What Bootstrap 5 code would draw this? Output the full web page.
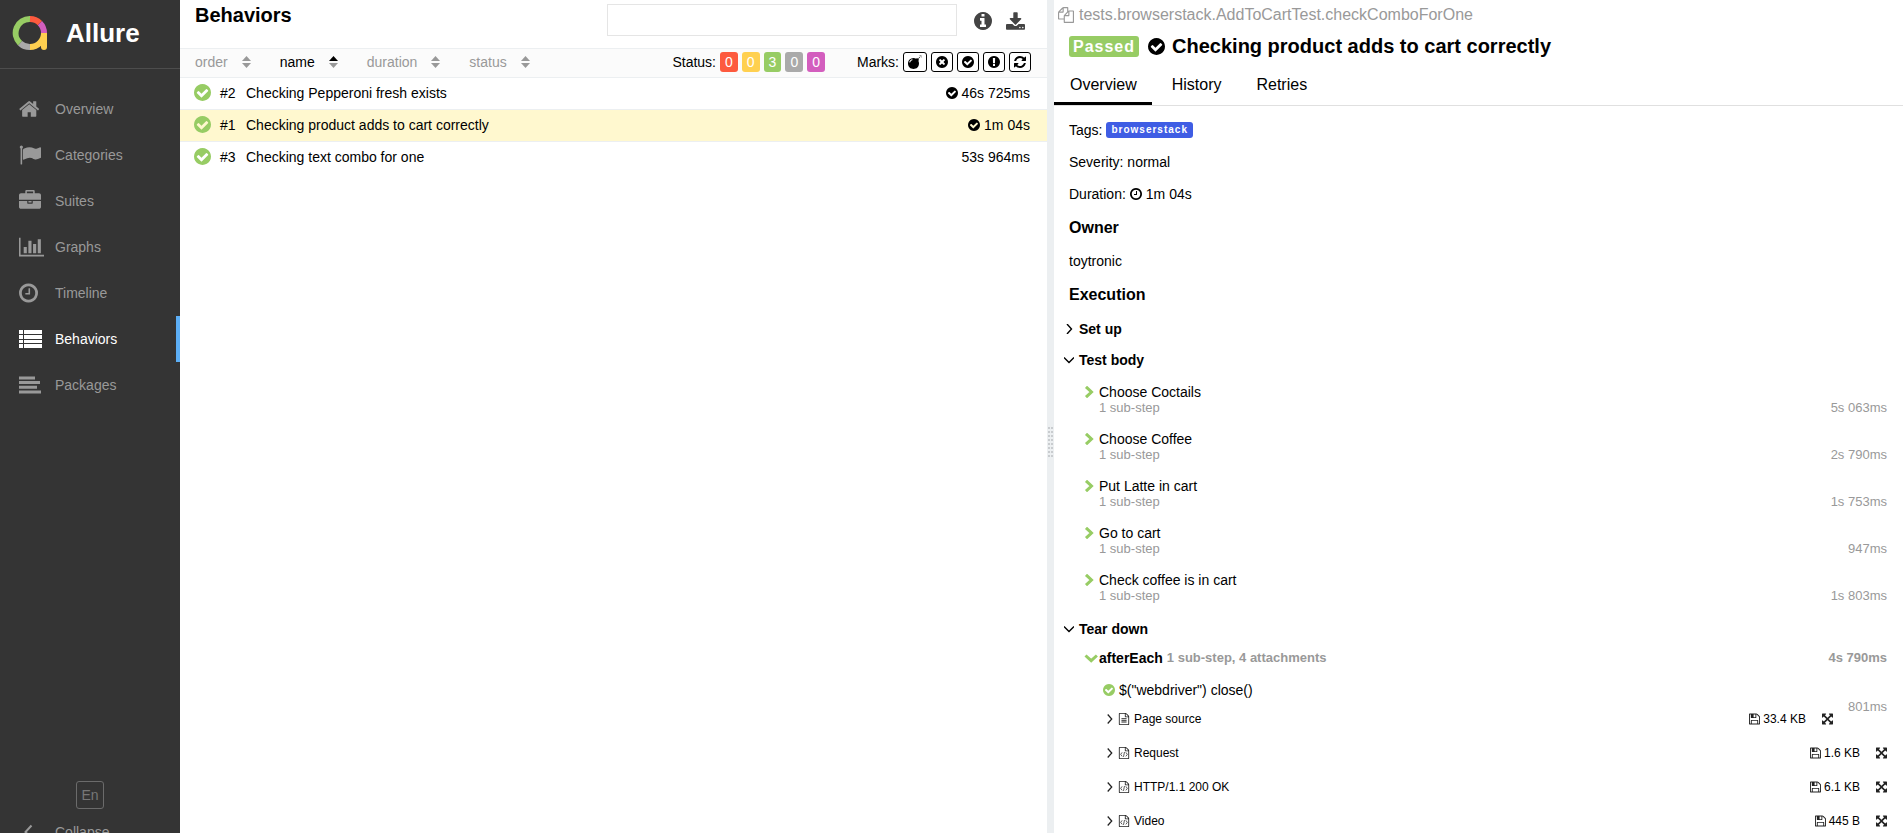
<!DOCTYPE html>
<html lang="en">
<head>
<meta charset="utf-8">
<meta name="viewport" content="width=device-width, initial-scale=1">
<title>Allure Report</title>
<link href="https://cdn.jsdelivr.net/npm/bootstrap@5.3.0/dist/css/bootstrap.min.css" rel="stylesheet">
<style>
  body { font: 14px/20px "Liberation Sans", Arial, sans-serif; color: #000; background: #fff; }
  a { color: inherit; text-decoration: none; }
  button { font: inherit; color: inherit; }
  .ico { width: 1em; height: 1em; fill: currentColor; flex: none; display: block; }
  .line-ico { fill: none; stroke: currentColor; }
  .w9 { width: 9px; }
  .w11 { width: 11px; }
  .w12 { width: 12px; height: 12px; }
  .w17 { width: 17px; height: 17px; }
  .w18 { width: 18px; height: 18px; }
  .w19 { width: 19px; }
  .w23 { width: 23px; }
  .w25 { width: 25px; }
  .muted { color: #999; }
  .passed-color { color: #97cc64; }

  /* side navigation */
  .side { flex: 0 0 180px; background: #343434; color: #999; }
  .side-inner { min-height: calc(100vh + 22px); }
  .brand { height: 69px; border-bottom: 1px solid #4d4d4d; color: #fff; font-size: 26px; font-weight: 700; padding: 0 0 2px 12px; gap: 18px; }
  .side-menu { padding-top: 17px; }
  .side-link { height: 46px; padding-left: 19px; border-right: 4px solid transparent; }
  .side-link.active { color: #fff; border-color: #5caef5; }
  .side-ico { width: 36px; font-size: 22px; }
  .lang-btn { width: 28px; height: 28px; border: 1px solid #6b6b6b; border-radius: 3px; background: none; color: #777; padding: 0; }

  /* list of tests */
  .tree-pane { flex: 867 1 0; min-width: 0; }
  .detail-pane { flex: 849 1 0; min-width: 0; }
  .tree-head { height: 49px; border-bottom: 1px solid #eceff1; padding: 0 22px 0 15px; gap: 14px; }
  h1 { font-size: 20px; line-height: 30px; font-weight: 700; margin: 0; }
  .search-box { width: 350px; height: 32px; border: 1px solid #e5e5e5; border-radius: 0; margin: 4px 3px 0 0; padding: 4px 8px; }
  .tool-btn { border: 0; background: none; padding: 0; height: 42px; color: #444; font-size: 20px; }
  .tree-bar { height: 29px; background: #fbfbfb; border-bottom: 1px solid #eceff1; padding: 0 16px 2px 15px; }
  .sort-list { gap: 29px; }
  .sort-btn { border: 0; background: none; padding: 0; gap: 14px; color: #999; }
  .sort-btn.active { color: #000; }
  .sort-btn .ico { width: 9px; height: 12px; }
  .count-btn { height: 20px; border: 0; border-radius: 3px; color: #fff; padding: 0 5px; }
  .st-failed { background: #fd5a3e; }
  .st-broken { background: #ffd050; }
  .st-passed { background: #97cc64; }
  .st-skipped { background: #aaa; }
  .st-unknown { background: #d35ebe; }
  .mark-group { margin-left: 32px; }
  .mark-btn { height: 20px; min-width: 22px; border: 1px solid #000; border-radius: 3px; background: #fff; padding: 0 4px; font-size: 14px; }
  .tree-row { height: 32px; border-bottom: 1px solid #eceff1; padding: 0 17px 2px 14px; }
  .tree-row.selected { background: #fff8cf; }
  .tree-row:last-child { border-color: transparent; }
  .gap-num { width: 26px; margin-left: 9px; }

  .gutter-bar { flex: 0 0 7px; background: #eceff1; }
  .gutter-dots { width: 5px; height: 32px; margin-top: 52px; }

  /* test details */
  .pkg-line { padding: 5px 0 0 4px; font-size: 16px; gap: 5px; }
  .test-title { padding-left: 15px; margin-top: 6px; font-size: 20px; line-height: 30px; font-weight: 700; }
  .title-ico { margin: 0 7px 0 9px; }
  .status-label { background: #97cc64; color: #fff; border-radius: 3px; font-size: 16px; line-height: 21px; letter-spacing: 1px; padding: 0 4px; }
  .tag-label { background: #3f5de4; color: #fff; border-radius: 3px; font-size: 10px; line-height: 16px; font-weight: 700; letter-spacing: 1px; padding: 0 5px; }
  .tab-strip { border-bottom: 1px solid #e0e0e0; margin-top: 4px; font-size: 16px; gap: 4px; }
  .tab-link { padding: 10px 15px 7px 16px; border-bottom: 3px solid transparent; }
  .tab-link.active { border-color: #000; }
  .detail-body { padding: 14px 16px 0 15px; }
  .fact { margin-bottom: 12px; }
  .detail-body h2 { font-size: 16px; line-height: 20px; font-weight: 700; margin: 14px 0 13px; }
  .stage-btn { border: 0; background: none; padding: 0; margin: 0 0 11px -5px; font-weight: 700; }
  h2 + .stage-btn { margin-top: 14px; }
  .stage-btn .ico { width: 10px; height: 10px; margin-right: 5px; }
  .step { margin: 0 0 15px 30px; line-height: 16px; }
  .step-steps { padding-top: 3px; }
  .step-btn { border: 0; background: none; padding: 0; margin-left: -15px; }
  .step-btn .ico { width: 15px; height: 12px; }
  .small-text { font-size: 13px; }
  .nested { padding: 1px 0 0 34px; }
  .leaf-step { line-height: 16px; }
  .step-time { margin: 1px 0 0 15px; line-height: 16px; }
  .att-list { padding-top: 4px; font-size: 12px; }
  .att-row { height: 34px; padding-left: 2px; }
  .att-row .ico { font-size: 12px; color: #222; }
  .att-btn, .icon-btn { border: 0; background: none; padding: 0; }
  .save-link { gap: 3px; }
</style>
</head>
<body>
<svg class="d-none" aria-hidden="true">
  <symbol id="i-check" viewBox="128 128 1536 1536"><path d="M1412 734q0-28-18-46l-91-90q-19-19-45-19t-45 19l-408 407-226-226q-19-19-45-19t-45 19l-91 90q-18 18-18 46 0 27 18 45l362 362q19 19 45 19 27 0 46-19l543-543q18-18 18-45zm252 162q0 209-103 385.5t-279.5 279.5-385.5 103-385.5-103-279.5-279.5-103-385.5 103-385.5 279.5-279.5 385.5-103 385.5 103 279.5 279.5 103 385.5z"/></symbol>
  <symbol id="i-home" viewBox="64 0 1792 1792"><path d="M1472 992v480q0 26-19 45t-45 19h-384v-384h-256v384h-384q-26 0-45-19t-19-45v-480q0-1 .5-3t.5-3l575-474 575 474q1 2 1 6zm223-69l-62 74q-8 9-21 11h-3q-13 0-21-7l-692-577-692 577q-12 8-24 7-13-2-21-11l-62-74q-8-10-7-23.5t11-21.5l719-599q32-26 76-26t76 26l244 204v-195q0-14 9-23t23-9h192q14 0 23 9t9 23v408l219 182q10 8 11 21.5t-7 23.5z"/></symbol>
  <symbol id="i-flag" viewBox="0 0 1792 1792"><path d="M320 256q0 72-64 110v1266q0 13-9.500 22.500t-22.500 9.500h-64q-13 0-22.500-9.500t-9.500-22.500v-1266q-64-38-64-110 0-53 37.500-90.500t90.500-37.500 90.500 37.500 37.500 90.500zm1472 64v763q0 25-12.500 38.500t-39.500 27.500q-215 116-369 116-61 0-123.500-22t-108.500-48-115.500-48-142.500-22q-192 0-464 146-17 9-33 9-26 0-45-19t-19-45v-742q0-32 31-55 21-14 79-43 236-120 421-120 107 0 200 29t219 88q38 19 88 19 54 0 117.500-21t110-47 88-47 54.500-21q26 0 45 19t19 45z"/></symbol>
  <symbol id="i-case" viewBox="0 0 1792 1792"><path d="M640 256h512v-128h-512v128zm1152 640v480q0 66-47 113t-113 47h-1472q-66 0-113-47t-47-113v-480h672v160q0 26 19 45t45 19h320q26 0 45-19t19-45v-160h672zm-768 0v128h-256v-128h256zm768-480v384h-1792v-384q0-66 47-113t113-47h352v-160q0-40 28-68t68-28h576q40 0 68 28t28 68v160h352q66 0 113 47t47 113z"/></symbol>
  <symbol id="i-chart" viewBox="0 0 2048 1792"><path d="M640 896v512h-256v-512h256zm384-512v1024h-256v-1024h256zm1024 1152v128h-2048v-1536h128v1408h1920zm-640-896v768h-256v-768h256zm384-384v1152h-256v-1152h256z"/></symbol>
  <symbol id="i-clock" viewBox="128 128 1536 1536"><path d="M1024 544v448q0 14-9 23t-23 9h-320q-14 0-23-9t-9-23v-64q0-14 9-23t23-9h224v-352q0-14 9-23t23-9h64q14 0 23 9t9 23zm416 352q0-148-73-273t-198-198-273-73-273 73-198 198-73 273 73 273 198 198 273 73 273-73 198-198 73-273zm224 0q0 209-103 385.5t-279.5 279.5-385.5 103-385.5-103-279.5-279.5-103-385.5 103-385.5 279.5-279.5 385.5-103 385.5 103 279.5 279.5 103 385.5z"/></symbol>
  <symbol id="i-list" viewBox="0 0 23 22"><path d="M0 2h4v4H0zM5 2h18v4H5zM0 7h4v4H0zM5 7h18v4H5zM0 12h4v3H0zM5 12h18v3H5zM0 16h4v4H0zM5 16h18v4H5z"/></symbol>
  <symbol id="i-left" viewBox="0 0 22 17"><path d="M0 0h16v3H0zM0 4.600h21v3H0zM0 9.300h18v3H0zM0 14h22v3H0z"/></symbol>
  <symbol id="i-info" viewBox="128 128 1536 1536"><path d="M1152 1376v-160q0-14-9-23t-23-9h-96v-512q0-14-9-23t-23-9h-320q-14 0-23 9t-9 23v160q0 14 9 23t23 9h96v320h-96q-14 0-23 9t-9 23v160q0 14 9 23t23 9h448q14 0 23-9t9-23zm-128-896v-160q0-14-9-23t-23-9h-192q-14 0-23 9t-9 23v160q0 14 9 23t23 9h192q14 0 23-9t9-23zm640 416q0 209-103 385.5t-279.5 279.5-385.5 103-385.5-103-279.5-279.5-103-385.5 103-385.5 279.5-279.5 385.5-103 385.5 103 279.5 279.5 103 385.5z"/></symbol>
  <symbol id="i-down" viewBox="64 0 1664 1536"><path d="M1344 1344q0-26-19-45t-45-19-45 19-19 45 19 45 45 19 45-19 19-45zm256 0q0-26-19-45t-45-19-45 19-19 45 19 45 45 19 45-19 19-45zm128-224v320q0 40-28 68t-68 28h-1472q-40 0-68-28t-28-68v-320q0-40 28-68t68-28h465l135 136q58 56 136 56t136-56l136-136h464q40 0 68 28t28 68zm-325-569q17 41-14 70l-448 448q-18 19-45 19t-45-19l-448-448q-31-29-14-70 17-39 59-39h256v-448q0-26 19-45t45-19h256q26 0 45 19t19 45v448h256q42 0 59 39z"/></symbol>
  <symbol id="i-times" viewBox="128 128 1536 1536"><path d="M1277 1122q0-26-19-45l-181-181 181-181q19-19 19-45 0-27-19-46l-90-90q-19-19-46-19-26 0-45 19l-181 181-181-181q-19-19-45-19-27 0-46 19l-90 90q-19 19-19 46 0 26 19 45l181 181-181 181q-19 19-19 45 0 27 19 46l90 90q19 19 46 19 26 0 45-19l181-181 181 181q19 19 45 19 27 0 46-19l90-90q19-19 19-46zm387-226q0 209-103 385.5t-279.5 279.5-385.5 103-385.5-103-279.5-279.5-103-385.5 103-385.5 279.5-279.5 385.5-103 385.5 103 279.5 279.5 103 385.5z"/></symbol>
  <symbol id="i-excl" viewBox="128 128 1536 1536"><path d="M896 128q209 0 385.5 103t279.5 279.5 103 385.5-103 385.5-279.5 279.5-385.5 103-385.5-103-279.5-279.5-103-385.5 103-385.5 279.5-279.5 385.5-103zm128 1247v-190q0-14-9-23.5t-22-9.5h-192q-13 0-23 10t-10 23v190q0 13 10 23t23 10h192q13 0 22-9.5t9-23.5zm-2-344l18-621q0-12-10-18-10-8-24-8h-220q-14 0-24 8-10 6-10 18l17 621q0 10 10 17.5t24 7.500h185q14 0 23.5-7.500t10.500-17.500z"/></symbol>
  <symbol id="i-refresh" viewBox="128 128 1536 1536"><path d="M1639 1056q0 5-1 7-64 268-268 434.500t-478 166.500q-146 0-282.500-55t-243.500-157l-129 129q-19 19-45 19t-45-19-19-45v-448q0-26 19-45t45-19h448q26 0 45 19t19 45-19 45l-137 137q71 66 161 102t187 36q134 0 250-65t186-179q11-17 53-117 8-23 30-23h192q13 0 22.500 9.500t9.500 22.500zm25-800v448q0 26-19 45t-45 19h-448q-26 0-45-19t-19-45 19-45l138-138q-148-137-349-137-134 0-250 65t-186 179q-11 17-53 117-8 23-30 23h-199q-13 0-22.500-9.500t-9.500-22.500v-7q65-268 270-434.500t480-166.500q146 0 284 55.500t245 156.500l130-129q19-19 45-19t45 19 19 45z"/></symbol>
  <symbol id="i-bomb" viewBox="0 0 1792 1792"><path d="M571 589q-10-25-34-35t-49 0q-108 44-191 127t-127 191q-10 25 0 49t35 34q13 5 24 5 42 0 60-40 34-84 98.500-148.500t148.500-98.500q25-11 35-35t0-49zm942-356l46 46-244 243 68 68q19 19 19 45.500t-19 45.500l-64 64q89 161 89 343 0 143-55.500 273.500t-150 225-225 150-273.500 55.500-273.500-55.500-225-150-150-225-55.500-273.500 55.500-273.500 150-225 225-150 273.500-55.500q182 0 343 89l64-64q19-19 45.500-19t45.500 19l68 68z"/><path d="M1500 40l90 90-30 30-90-90zM1650 200l90 90-30 30-90-90zM1640 150h120v-44h-120zM1590 0h44v110h-44z"/></symbol>
  <symbol id="i-files" viewBox="0 0 1792 1792"><path d="M1696 384q40 0 68 28t28 68v1216q0 40-28 68t-68 28h-960q-40 0-68-28t-28-68v-288h-544q-40 0-68-28t-28-68v-672q0-40 20-88t48-76l408-408q28-28 76-48t88-20h416q40 0 68 28t28 68v328q68-40 128-40h416zm-544 213l-299 299h299v-299zm-640-384l-299 299h299v-299zm196 647l316-316v-416h-384v416q0 40-28 68t-68 28h-416v640h512v-256q0-40 20-88t48-76zm956 804v-1152h-384v416q0 40-28 68t-68 28h-416v640h896z"/></symbol>
  <symbol id="i-save" viewBox="128 128 1536 1536"><path d="M512 1536h768v-384h-768v384zm896 0h128v-896q0-14-10-38.500t-20-34.500l-281-281q-10-10-34-20t-39-10v416q0 40-28 68t-68 28h-576q-40 0-68-28t-28-68v-416h-128v1280h128v-416q0-40 28-68t68-28h832q40 0 68 28t28 68v416zm-384-928v-320q0-13-9.500-22.500t-22.500-9.500h-192q-13 0-22.500 9.500t-9.500 22.500v320q0 13 9.500 22.500t22.500 9.500h192q13 0 22.500-9.500t9.500-22.500zm640 32v928q0 40-28 68t-68 28h-1344q-40 0-68-28t-28-68v-1344q0-40 28-68t68-28h928q40 0 88 20t76 48l280 280q28 28 48 76t20 88z"/></symbol>
  <symbol id="i-text" viewBox="0 0 1792 1792"><path d="M1596 380q28 28 48 76t20 88v1152q0 40-28 68t-68 28h-1344q-40 0-68-28t-28-68v-1600q0-40 28-68t68-28h896q40 0 88 20t76 48zm-444-244v376h376q-10-29-22-41l-313-313q-12-12-41-22zm384 1528v-1024h-416q-40 0-68-28t-28-68v-416h-768v1536h1280zM512 768h768v128h-768zM512 1024h768v128h-768zM512 1280h768v128h-768z"/></symbol>
  <symbol id="i-code" viewBox="0 0 1792 1792"><path d="M1596 380q28 28 48 76t20 88v1152q0 40-28 68t-68 28h-1344q-40 0-68-28t-28-68v-1600q0-40 28-68t68-28h896q40 0 88 20t76 48zm-444-244v376h376q-10-29-22-41l-313-313q-12-12-41-22zm384 1528v-1024h-416q-40 0-68-28t-28-68v-416h-768v1536h1280z"/><path d="M620 800L400 1100l220 300M1170 800l220 300-220 300M970 740L820 1480" fill="none" stroke="currentColor" stroke-width="110"/></symbol>
  <symbol id="i-expand" viewBox="128 128 1536 1536"><path d="M1411 541l-355 355 355 355 144-144q29-31 70-14 39 17 39 59v448q0 26-19 45t-45 19h-448q-42 0-59-40-17-39 14-69l144-144-355-355-355 355 144 144q31 30 14 69-17 40-59 40h-448q-26 0-45-19t-19-45v-448q0-42 40-59 39-17 69 14l144 144 355-355-355-355-144 144q-19 19-45 19-12 0-24-5-40-17-40-59v-448q0-26 19-45t45-19h448q42 0 59 40 17 39-14 69l-144 144 355 355 355-355-144-144q-31-30-14-69 17-40 59-40h448q26 0 45 19t19 45v448q0 42-39 59-13 5-25 5-26 0-45-19z"/></symbol>
  <symbol id="i-sort" viewBox="0 0 9 12"><path d="M4.500 0L9 5H0z"/><path d="M4.500 12L9 7H0z" fill="#999"/></symbol>
  <symbol id="i-angle-r" viewBox="0 0 10 10"><path d="M3 0l4.500 5L3 10" stroke-width="1.400"/></symbol>
  <symbol id="i-angle-d" viewBox="0 0 10 10"><path d="M0 2.500L5 7.500l5-5" stroke-width="1.400"/></symbol>
  <symbol id="i-chev-r" viewBox="0 0 15 12"><path d="M2 .800L7.500 6 2 11.200" stroke-width="3"/></symbol>
  <symbol id="i-chev-d" viewBox="0 0 15 12"><path d="M1.500 3.500l5.700 5.200 5.700-5.200" stroke-width="3"/></symbol>
</svg>

<div class="d-flex vh-100 overflow-hidden">
  <aside class="side overflow-hidden">
    <div class="side-inner d-flex flex-column">
      <a href="#" class="brand d-flex align-items-center">
        <svg width="36" height="36" viewBox="0 0 36 36" fill="none" stroke-width="6" aria-hidden="true">
          <path d="M8.100 28.200A14 14 0 0 1 18 4" stroke="#97cc64"/>
          <path d="M18 4A14 14 0 0 1 27.900 8.100" stroke="#fd5a3e"/>
          <path d="M27.900 8.100A14 14 0 0 1 32 18" stroke="#d35ebe"/>
          <path d="M18 32a14 14 0 0 1-9.900-3.800" stroke="#aaa"/>
          <path d="M32 18v14" stroke="#ffd050"/><path d="M32 18a14 14 0 0 1-14 14" stroke="#ffd050"/>
          <circle cx="32" cy="32" r="3" fill="#ffd050" stroke="none"/>
        </svg>
        <span>Allure</span>
      </a>
      <nav class="side-menu d-flex flex-column">
        <a href="#" class="side-link d-flex align-items-center"><span class="side-ico"><svg class="ico"><use href="#i-home"/></svg></span>Overview</a>
        <a href="#" class="side-link d-flex align-items-center"><span class="side-ico"><svg class="ico"><use href="#i-flag"/></svg></span>Categories</a>
        <a href="#" class="side-link d-flex align-items-center"><span class="side-ico"><svg class="ico"><use href="#i-case"/></svg></span>Suites</a>
        <a href="#" class="side-link d-flex align-items-center"><span class="side-ico"><svg class="ico w25"><use href="#i-chart"/></svg></span>Graphs</a>
        <a href="#" class="side-link d-flex align-items-center"><span class="side-ico"><svg class="ico w19"><use href="#i-clock"/></svg></span>Timeline</a>
        <a href="#" class="side-link active d-flex align-items-center" aria-current="page"><span class="side-ico"><svg class="ico w23"><use href="#i-list"/></svg></span>Behaviors</a>
        <a href="#" class="side-link d-flex align-items-center"><span class="side-ico"><svg class="ico"><use href="#i-left"/></svg></span>Packages</a>
      </nav>
      <div class="mt-auto d-flex justify-content-center"><button class="lang-btn" type="button">En</button></div>
      <a href="#" class="side-link d-flex align-items-center"><span class="side-ico"><svg class="ico line-ico" viewBox="0 0 22 22"><path d="M12.500 4.500L6.500 11l6 6.500" stroke-width="2"/></svg></span>Collapse</a>
    </div>
  </aside>

  <main class="tree-pane">
    <header class="tree-head d-flex align-items-start">
      <h1>Behaviors</h1>
      <input class="search-box ms-auto" type="text" aria-label="Search">
      <button class="tool-btn" type="button" aria-label="Info"><svg class="ico w18"><use href="#i-info"/></svg></button>
      <button class="tool-btn" type="button" aria-label="Download"><svg class="ico w19"><use href="#i-down"/></svg></button>
    </header>
    <div class="tree-bar d-flex align-items-center">
      <div class="sort-list d-flex">
        <button class="sort-btn d-flex align-items-center" type="button">order<svg class="ico"><use href="#i-sort"/></svg></button>
        <button class="sort-btn active d-flex align-items-center" type="button">name<svg class="ico"><use href="#i-sort"/></svg></button>
        <button class="sort-btn d-flex align-items-center" type="button">duration<svg class="ico"><use href="#i-sort"/></svg></button>
        <button class="sort-btn d-flex align-items-center" type="button">status<svg class="ico"><use href="#i-sort"/></svg></button>
      </div>
      <div class="ms-auto d-flex align-items-center gap-1">
        <span>Status:</span>
        <button class="count-btn st-failed" type="button">0</button>
        <button class="count-btn st-broken" type="button">0</button>
        <button class="count-btn st-passed" type="button">3</button>
        <button class="count-btn st-skipped" type="button">0</button>
        <button class="count-btn st-unknown" type="button">0</button>
      </div>
      <div class="mark-group d-flex align-items-center gap-1">
        <span>Marks:</span>
        <button class="mark-btn" type="button" aria-label="Flaky"><svg class="ico"><use href="#i-bomb"/></svg></button>
        <button class="mark-btn" type="button" aria-label="New failed"><svg class="ico w12"><use href="#i-times"/></svg></button>
        <button class="mark-btn" type="button" aria-label="New passed"><svg class="ico w12"><use href="#i-check"/></svg></button>
        <button class="mark-btn" type="button" aria-label="New broken"><svg class="ico w12"><use href="#i-excl"/></svg></button>
        <button class="mark-btn" type="button" aria-label="Retries"><svg class="ico w12"><use href="#i-refresh"/></svg></button>
      </div>
    </div>
    <div>
      <a href="#" class="tree-row d-flex align-items-center"><svg class="ico w17 passed-color"><use href="#i-check"/></svg><span class="gap-num">#2</span><span>Checking Pepperoni fresh exists</span><svg class="ico w12 ms-auto me-1"><use href="#i-check"/></svg><span>46s 725ms</span></a>
      <a href="#" class="tree-row selected d-flex align-items-center"><svg class="ico w17 passed-color"><use href="#i-check"/></svg><span class="gap-num">#1</span><span>Checking product adds to cart correctly</span><svg class="ico w12 ms-auto me-1"><use href="#i-check"/></svg><span>1m 04s</span></a>
      <a href="#" class="tree-row d-flex align-items-center"><svg class="ico w17 passed-color"><use href="#i-check"/></svg><span class="gap-num">#3</span><span>Checking text combo for one</span><span class="ms-auto">53s 964ms</span></a>
    </div>
  </main>

  <div class="gutter-bar d-flex align-items-center justify-content-center">
    <svg class="gutter-dots" aria-hidden="true"><defs><pattern id="dots" width="3" height="4" patternUnits="userSpaceOnUse"><rect width="2" height="2" fill="#c9cccf"/></pattern></defs><rect width="5" height="32" fill="url(#dots)"/></svg>
  </div>

  <section class="detail-pane overflow-hidden">
    <div class="pkg-line muted d-flex align-items-center"><svg class="ico"><use href="#i-files"/></svg><span>tests.browserstack.AddToCartTest.checkComboForOne</span></div>
    <div class="test-title d-flex align-items-center"><span class="status-label">Passed</span><svg class="ico w17 title-ico"><use href="#i-check"/></svg><span>Checking product adds to cart correctly</span></div>
    <nav class="tab-strip d-flex">
      <a href="#" class="tab-link active" aria-current="page">Overview</a>
      <a href="#" class="tab-link">History</a>
      <a href="#" class="tab-link">Retries</a>
    </nav>
    <div class="detail-body">
      <div class="fact d-flex align-items-center gap-1">Tags: <span class="tag-label">browserstack</span></div>
      <div class="fact">Severity: normal</div>
      <div class="fact d-flex align-items-center gap-1">Duration: <svg class="ico w12"><use href="#i-clock"/></svg> 1m 04s</div>
      <h2>Owner</h2>
      <div class="fact">toytronic</div>
      <h2>Execution</h2>
      <button class="stage-btn d-flex align-items-center" type="button"><svg class="ico line-ico"><use href="#i-angle-r"/></svg>Set up</button>
      <button class="stage-btn d-flex align-items-center" type="button"><svg class="ico line-ico"><use href="#i-angle-d"/></svg>Test body</button>
      <div class="step-steps">
        <div class="step"><button class="step-btn d-flex align-items-center" type="button"><svg class="ico line-ico passed-color"><use href="#i-chev-r"/></svg>Choose Coctails</button><div class="d-flex justify-content-between muted small-text"><span>1 sub-step</span><span>5s 063ms</span></div></div>
        <div class="step"><button class="step-btn d-flex align-items-center" type="button"><svg class="ico line-ico passed-color"><use href="#i-chev-r"/></svg>Choose Coffee</button><div class="d-flex justify-content-between muted small-text"><span>1 sub-step</span><span>2s 790ms</span></div></div>
        <div class="step"><button class="step-btn d-flex align-items-center" type="button"><svg class="ico line-ico passed-color"><use href="#i-chev-r"/></svg>Put Latte in cart</button><div class="d-flex justify-content-between muted small-text"><span>1 sub-step</span><span>1s 753ms</span></div></div>
        <div class="step"><button class="step-btn d-flex align-items-center" type="button"><svg class="ico line-ico passed-color"><use href="#i-chev-r"/></svg>Go to cart</button><div class="d-flex justify-content-between muted small-text"><span>1 sub-step</span><span>947ms</span></div></div>
        <div class="step"><button class="step-btn d-flex align-items-center" type="button"><svg class="ico line-ico passed-color"><use href="#i-chev-r"/></svg>Check coffee is in cart</button><div class="d-flex justify-content-between muted small-text"><span>1 sub-step</span><span>1s 803ms</span></div></div>
      </div>

      <button class="stage-btn d-flex align-items-center" type="button"><svg class="ico line-ico"><use href="#i-angle-d"/></svg>Tear down</button>
      <div class="step fw-bold d-flex align-items-center"><button class="step-btn d-flex align-items-center fw-bold" type="button"><svg class="ico line-ico passed-color"><use href="#i-chev-d"/></svg>afterEach</button><span class="muted small-text ms-1">1 sub-step, 4 attachments</span><span class="muted small-text ms-auto">4s 790ms</span></div>
      <div class="nested">
        <div class="leaf-step d-flex align-items-center"><svg class="ico w12 passed-color me-1"><use href="#i-check"/></svg>$("webdriver") close()</div>
        <span class="step-time float-end muted small-text">801ms</span>
        <div class="att-list">
          <div class="att-row d-flex align-items-center"><button class="att-btn d-flex align-items-center" type="button"><svg class="ico line-ico w9"><use href="#i-angle-r"/></svg><svg class="ico ms-1 me-1"><use href="#i-text"/></svg>Page source</button><a href="#" class="save-link ms-auto me-3 d-flex align-items-center"><svg class="ico w11"><use href="#i-save"/></svg>33.4 KB</a><button class="icon-btn" type="button" aria-label="Full screen"><svg class="ico w11"><use href="#i-expand"/></svg></button></div>
          <div class="att-row d-flex align-items-center"><button class="att-btn d-flex align-items-center" type="button"><svg class="ico line-ico w9"><use href="#i-angle-r"/></svg><svg class="ico ms-1 me-1"><use href="#i-code"/></svg>Request</button><a href="#" class="save-link ms-auto me-3 d-flex align-items-center"><svg class="ico w11"><use href="#i-save"/></svg>1.6 KB</a><button class="icon-btn" type="button" aria-label="Full screen"><svg class="ico w11"><use href="#i-expand"/></svg></button></div>
          <div class="att-row d-flex align-items-center"><button class="att-btn d-flex align-items-center" type="button"><svg class="ico line-ico w9"><use href="#i-angle-r"/></svg><svg class="ico ms-1 me-1"><use href="#i-code"/></svg>HTTP/1.1 200 OK</button><a href="#" class="save-link ms-auto me-3 d-flex align-items-center"><svg class="ico w11"><use href="#i-save"/></svg>6.1 KB</a><button class="icon-btn" type="button" aria-label="Full screen"><svg class="ico w11"><use href="#i-expand"/></svg></button></div>
          <div class="att-row d-flex align-items-center"><button class="att-btn d-flex align-items-center" type="button"><svg class="ico line-ico w9"><use href="#i-angle-r"/></svg><svg class="ico ms-1 me-1"><use href="#i-code"/></svg>Video</button><a href="#" class="save-link ms-auto me-3 d-flex align-items-center"><svg class="ico w11"><use href="#i-save"/></svg>445 B</a><button class="icon-btn" type="button" aria-label="Full screen"><svg class="ico w11"><use href="#i-expand"/></svg></button></div>
        </div>
      </div>
    </div>
  </section>
</div>
<script src="https://cdn.jsdelivr.net/npm/bootstrap@5.3.0/dist/js/bootstrap.bundle.min.js"></script>
</body>
</html>
